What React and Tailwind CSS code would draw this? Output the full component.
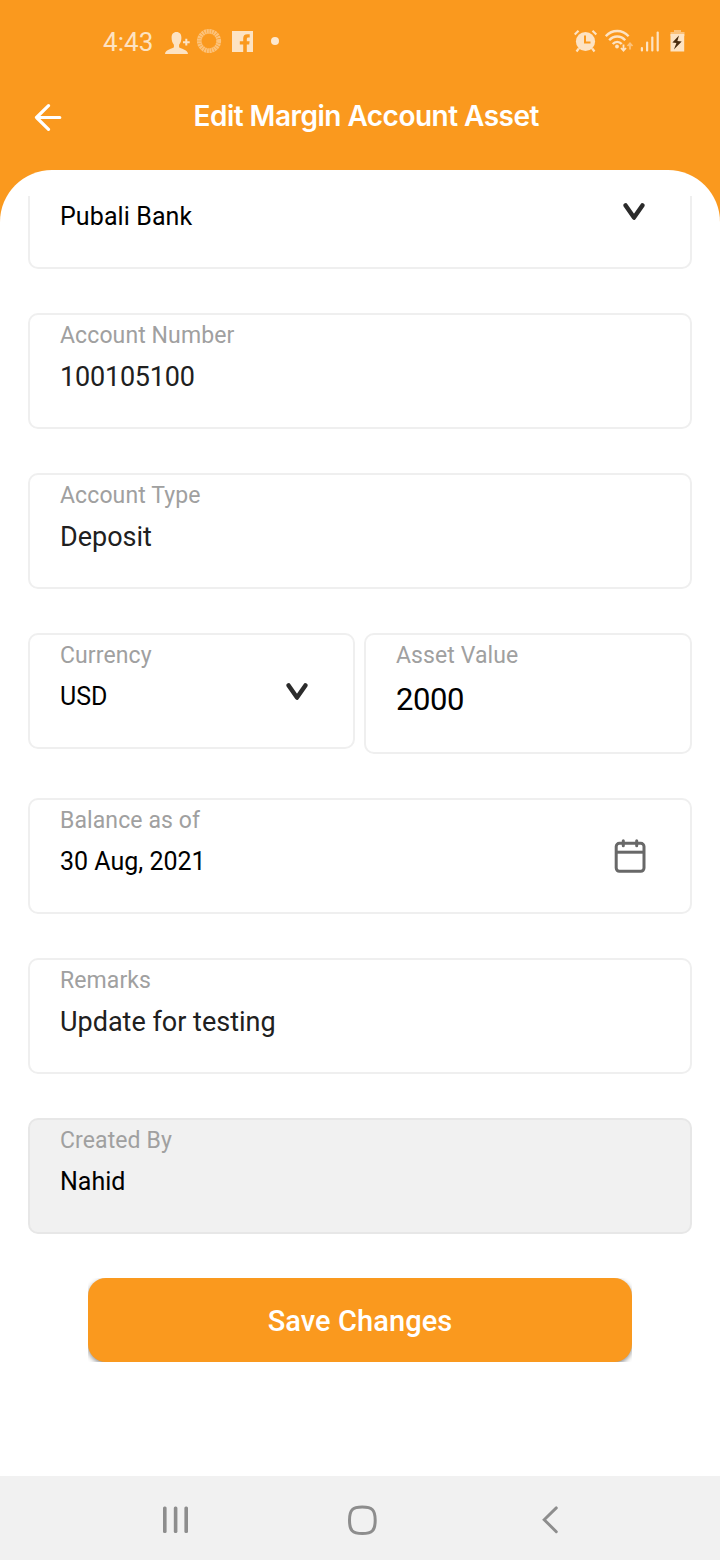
import React from "react";

function Chevron({ className }) {
  return (
    <svg className={className} width="22" height="18" viewBox="0 0 22 18" fill="none">
      <path d="M2.600 2.400 11 14.600 19.400 2.400" stroke="#2b2b2b" strokeWidth="4.400" strokeLinecap="round" strokeLinejoin="round" />
    </svg>
  );
}

function CalendarIcon() {
  return (
    <svg className="mr-[44px] mt-[38px] shrink-0" width="32" height="36" viewBox="0 0 32 36" fill="none" stroke="#686868" strokeWidth="3">
      <rect x="2.200" y="5.300" width="27.800" height="28" rx="3.200" />
      <path d="M2 14.200h28" />
      <path d="M9.300 2.800v5M22.700 2.800v5" strokeLinecap="round" />
    </svg>
  );
}

function Field({ label, value, valueClass, boxClass = "h-[116px] border-[#efefef]", icon }) {
  return (
    <div className={`flex justify-between rounded-[10px] border-2 pl-[30px] ${boxClass}`}>
      <div className="whitespace-nowrap">
        <div className="mt-[7px] h-[28px] text-[23px] leading-[28px] tracking-[0.1px] text-[#a0a0a0]">{label}</div>
        <div className={`mt-[11px] h-[32px] leading-[32px] ${valueClass}`}>{value}</div>
      </div>
      {icon}
    </div>
  );
}

const picked = "text-[25px] text-black";
const typed = "text-[27px] text-[#202020]";

function StatusBar() {
  return (
    <div className="flex h-[82px] items-center justify-between pl-[103px] pr-[35px] text-[#fde3c3]">
      <div className="flex items-center">
        <span className="mt-[2px] w-[62px] text-[26px] leading-[30px] tracking-[0.1px]">4:43</span>
        <svg className="mt-[3px]" width="25" height="24" viewBox="0 0 25 24" fill="currentColor">
          <path d="M11.500 1c3.200 0 4.900 2.200 4.900 5.700 0 3-.8 5.300-2.300 7v2.500c1 1.500 8.900 2 8.900 6.800H0c0-4.800 7.900-5.300 8.900-6.800v-2.500c-1.500-1.700-2.300-4-2.300-7C6.600 3.200 8.300 1 11.500 1Z" />
          <path d="M21.300 7.800v6.800M18 11.200h6.700" stroke="currentColor" strokeWidth="2" />
        </svg>
        <svg className="ml-[6px]" width="26" height="26" viewBox="0 0 26 26" fill="none">
          <circle cx="13" cy="13" r="9.700" stroke="#fcc27a" strokeWidth="4.800" strokeDasharray="2.050 0.490" />
        </svg>
        <svg className="ml-[10px]" width="21" height="21" viewBox="0 0 21 21">
          <path fill="currentColor" d="M0 0h21v21h-6.200v-7.600h2.400l.4-3.200h-2.800V8c0-1 .5-1.600 1.600-1.600h1.300V3.200h-2.300c-3 0-4.200 1.500-4.200 4.200v2.800H7.800v3.200h3.400V21H0Z" />
        </svg>
        <span className="ml-[18px] h-[8px] w-[8px] rounded-full bg-[#fde8cf]" />
      </div>
      <div className="flex items-center">
        <svg width="24" height="24" viewBox="0 0 24 24" fill="none">
          <circle cx="11.500" cy="12.500" r="9.600" fill="currentColor" />
          <path d="M.7 5.500 4.500 1.800M22.300 5.500 18.500 1.800M4.800 19.500 2.500 22.500M18.200 19.500 20.500 22.500" stroke="currentColor" strokeWidth="2.200" />
          <path d="M11 6.500v7h5.500" stroke="#fa991e" strokeWidth="2" />
        </svg>
        <svg className="ml-[7px]" width="29" height="24" viewBox="0 0 29 24" fill="none" stroke="currentColor" strokeWidth="2.400">
          <path d="M.8 7.200c6.300-6.900 16.500-6.900 22.800 0M4.200 11.200c4.500-5 11.500-5 16 0M7.700 15c2.500-2.900 6.500-2.900 9 0" />
          <circle cx="12" cy="17.500" r="1.900" fill="currentColor" stroke="none" />
          <path d="M18.500 15.500v6M16 19l2.500 2.700 2.500-2.700" strokeWidth="1.800" />
          <path d="M25 20.500v-6M22.500 17l2.500-2.700 2.500 2.700" stroke="#fcc27a" strokeWidth="1.800" />
        </svg>
        <svg className="ml-[6px]" width="19" height="22" viewBox="0 0 19 22" fill="currentColor">
          <rect x="0.800" y="17" width="2.200" height="4.500" rx="1" />
          <rect x="6" y="11.500" width="2.200" height="10" rx="1" />
          <rect x="11.200" y="6.500" width="2.200" height="15" rx="1" />
          <rect x="16.600" y="1.500" width="2.200" height="20" rx="1" />
        </svg>
        <svg className="ml-[11px]" width="15" height="24" viewBox="0 0 15 24">
          <path fill="#fcc27a" d="M4 1h7v2h3.500v4H.5V3H4Z" />
          <path fill="currentColor" d="M.5 5h13.700v17.500H.5Z" />
          <path fill="#4a2d10" d="M9 6.500 2.400 13.500l4 .5-2.500 6.500L11.700 12.500l-4.300-.6Z" />
        </svg>
      </div>
    </div>
  );
}

function Header() {
  return (
    <header className="flex h-[88px] pl-[34px]">
      <svg className="mt-[22px] shrink-0" width="28" height="28" viewBox="0 0 28 28" fill="none" stroke="#fff" strokeWidth="3.200" strokeLinecap="round" strokeLinejoin="round">
        <path d="M25.800 13.500H2.500M14.500 1.700 2.500 13.500 14.500 25.300" />
      </svg>
      <h1 className="ml-[131.5px] mt-[18px] h-[32px] whitespace-nowrap font-['Inter',sans-serif] text-[28px] font-semibold leading-[33px] tracking-[-0.52px] text-white">
        Edit Margin Account Asset
      </h1>
    </header>
  );
}

function NavBar() {
  return (
    <nav className="flex h-[84px] items-center bg-[#f1f1f1] pl-[162px] pt-[3px] text-[#8d8d8d]">
      <svg width="28" height="28" viewBox="0 0 28 28" fill="currentColor">
        <rect x="1" y="0.500" width="3.600" height="26.500" rx="1.500" />
        <rect x="11.800" y="0.500" width="3.600" height="26.500" rx="1.500" />
        <rect x="22.400" y="0.500" width="3.600" height="26.500" rx="1.500" />
      </svg>
      <svg className="ml-[157px]" width="30" height="30" viewBox="0 0 30 30" fill="none" stroke="currentColor" strokeWidth="3">
        <path d="M15.300 2C25.200 2 28.200 5 28.200 15.300S25.200 28.500 15.300 28.500 2.500 25.600 2.500 15.300 5.400 2 15.300 2Z" />
      </svg>
      <svg className="ml-[165px]" width="16" height="28" viewBox="0 0 16 28" fill="none" stroke="currentColor" strokeWidth="2.900" strokeLinecap="round">
        <path d="M14.300 1.900 2.200 13.700 14.300 25.700" />
      </svg>
    </nav>
  );
}

export default function App() {
  return (
    <div className="flex h-[1560px] w-[720px] flex-col overflow-hidden bg-[#fa991e] font-['Roboto',sans-serif]">
      <StatusBar />
      <Header />
      <main className="flex-1 rounded-t-[52px] bg-white px-[28px] pt-[26px]">
        <div className="flex h-[73px] justify-between rounded-b-[10px] border-x-2 border-b-2 border-[#efefef] pl-[30px]">
          <div className="mt-[5px] h-[32px] text-[25px] leading-[32px] tracking-[0.1px] text-black">Pubali Bank</div>
          <Chevron className="mr-[45px] mt-[7px]" />
        </div>
        <div className="mt-[44px] flex flex-col gap-[44px]">
          <Field label="Account Number" value="100105100" valueClass="text-[27px] tracking-[-0.2px] text-[#202020]" />
          <Field label="Account Type" value="Deposit" valueClass={typed} />
          <div className="flex items-start gap-[9px]">
            <Field
              label="Currency"
              value="USD"
              valueClass={picked}
              boxClass="h-[116px] w-[327px] border-[#efefef]"
              icon={<Chevron className="mr-[45px] mt-[48px]" />}
            />
            <Field label="Asset Value" value="2000" valueClass="pt-[3px] text-[31px] tracking-[-0.4px] text-black" boxClass="h-[121px] w-[328px] border-[#efefef]" />
          </div>
          <Field label="Balance as of" value="30 Aug, 2021" valueClass={picked} icon={<CalendarIcon />} />
          <Field label="Remarks" value="Update for testing" valueClass={typed} />
          <Field label="Created By" value="Nahid" valueClass={picked} boxClass="h-[116px] border-[#e7e7e7] bg-[#f1f1f1]" />
        </div>
        <div className="mx-[60px] mt-[44px] h-[84px] overflow-hidden">
          <button className="h-[84px] w-full rounded-[18px] bg-[#fa991e] pt-[2px] text-[29px] font-medium leading-[34px] tracking-[0.08px] text-white shadow-[0_2px_5px_rgba(0,0,0,0.45)]">
            Save Changes
          </button>
        </div>
      </main>
      <NavBar />
    </div>
  );
}
